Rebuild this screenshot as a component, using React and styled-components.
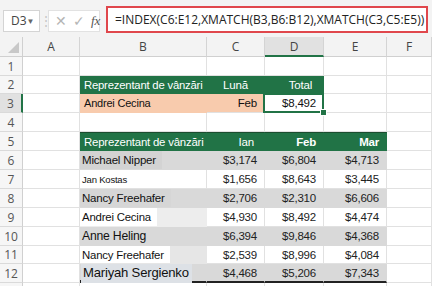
import styled, { createGlobalStyle } from "styled-components";

const Global = createGlobalStyle`
  html, body { margin: 0; padding: 0; background: #fff; }
  body { width: 432px; height: 286px; overflow: hidden; font-family: "Liberation Sans", Arial, sans-serif; }
`;

const GREEN = "#217346";
const GRAY = "#d9d9d9";
const ORANGE = "#f8cbad";

const Window = styled.div`
  width: 432px;
  height: 286px;
  overflow: hidden;
  display: flex;
  flex-direction: column;
  background: #fff;
`;

const FormulaBar = styled.div`
  flex-shrink: 0;
  display: flex;
  align-items: center;
  height: 37px;
  box-sizing: border-box;
  padding: 0 4px 3px 3px;
  background: #f3f3f3;
`;

const NameBox = styled.div`
  display: flex;
  align-items: center;
  justify-content: space-between;
  width: 37px;
  height: 22px;
  box-sizing: border-box;
  padding: 0 5px 0 7px;
  margin-top: 7px;
  background: #fff;
  border: 1px solid #d4d4d4;
  font-family: "Open Sans", sans-serif;
  font-size: 12px;
  color: #444;

  span { font-size: 8px; color: #666; }
`;

const Grip = styled.div`
  width: 8px;
  margin-top: 7px;
  text-align: center;
  color: #c4c4c4;
  font-size: 12px;
  line-height: 1;
`;

const FxBox = styled.div`
  display: flex;
  align-items: center;
  gap: 6px;
  width: 52px;
  height: 22px;
  margin-top: 7px;
  box-sizing: border-box;
  padding-left: 6px;
  background: #fff;
  border: 1px solid #e2e2e2;
  color: #b5b5b5;
  font-size: 14px;
`;

const Fx = styled.i`
  font-family: "Liberation Serif", serif;
  font-size: 13px;
  color: #555;
`;

const FormulaInput = styled.div`
  flex: 1;
  height: 27px;
  margin-left: 6px;
  margin-top: 4px;
  box-sizing: border-box;
  display: flex;
  align-items: center;
  padding-left: 7px;
  background: #fff;
  border: 2px solid #e0474c;
  font-family: "Open Sans", sans-serif;
  font-size: 12px;
  color: #222;
  white-space: nowrap;
  overflow: hidden;
`;

const Sheet = styled.div`
  flex-shrink: 0;
  display: grid;
  grid-template-columns: 23px 57px 127px 58px 59px 63px 45px;
  grid-template-rows: 20px 19px 18px 19px 19px 19px 19px 19px 19px 19px 19px 18px 19px 20px;
`;

const Corner = styled.div`
  position: relative;
  background: #f3f3f3;
  border-right: 1px solid #d0d0d0;
  border-bottom: 1px solid #d0d0d0;

  &::after {
    content: "";
    position: absolute;
    right: 3px;
    bottom: 3px;
    border-style: solid;
    border-width: 0 0 11px 11px;
    border-color: transparent transparent #c8c8c8 transparent;
  }
`;

const ColHead = styled.div`
  display: flex;
  align-items: center;
  justify-content: center;
  box-sizing: border-box;
  background: ${(p) => (p.$active ? "#e1e1e1" : "#f3f3f3")};
  border-right: 1px solid #d4d4d4;
  border-bottom: ${(p) => (p.$active ? `2px solid ${GREEN}` : "1px solid #d0d0d0")};
  font-family: "Open Sans", sans-serif;
  font-size: 12px;
  color: #444;
`;

const RowHead = styled.div`
  display: flex;
  align-items: center;
  justify-content: center;
  box-sizing: border-box;
  background: ${(p) => (p.$active ? "#e1e1e1" : "#f6f6f6")};
  border-right: ${(p) => (p.$active ? `2px solid ${GREEN}` : "1px solid #d0d0d0")};
  border-bottom: 1px solid #dadada;
  font-family: "Open Sans", sans-serif;
  font-size: 12px;
  color: #555;
`;

const Cell = styled.div`
  position: relative;
  display: flex;
  align-items: center;
  justify-content: ${(p) => p.$align || "flex-start"};
  box-sizing: border-box;
  padding: 0 ${(p) => (p.$align === "flex-end" ? "7px" : "4px")};
  background: ${(p) => p.$bg || "#fff"};
  border-right: 1px solid ${(p) => p.$line || "#e1e1e1"};
  border-bottom: 1px solid ${(p) => p.$line || "#e1e1e1"};
  ${(p) => p.$top && `border-top: 1px solid #1b4d2f;`}
  ${(p) => p.$bottom && `border-bottom: 2px solid #222;`}
  color: ${(p) => p.$color || "#111"};
  font-size: ${(p) => p.$size || 11.5}px;
  letter-spacing: -0.2px;
  font-weight: ${(p) => (p.$bold ? 700 : 400)};
  white-space: nowrap;
  overflow: visible;
`;

const Selected = styled(Cell)`
  &::after {
    content: "";
    position: absolute;
    inset: -1px -1px -1px -2px;
    border: 2px solid ${GREEN};
    pointer-events: none;
  }
  &::before {
    content: "";
    position: absolute;
    right: -4px;
    bottom: -4px;
    width: 5px;
    height: 5px;
    background: ${GREEN};
    border: 1px solid #fff;
    z-index: 2;
  }
`;

const NamePatch = styled.span`
  display: flex;
  align-items: center;
  align-self: stretch;
  margin-left: -2px;
  padding: 0 ${(p) => p.$pad || 6}px 0 2px;
  background: ${(p) => p.$bg};
  font-size: ${(p) => p.$size}px;
  ${(p) => p.$cover && `margin-bottom: -2px; align-items: flex-end; padding-bottom: 3px;`}
`;

const Underscore = styled.span`
  align-self: flex-end;
  margin-bottom: -1px;
  margin-left: -2px;
  width: 3px;
  height: 2px;
  background: #222;
`;

const cols = ["A", "B", "C", "D", "E", "F"];

const sales = [
  { name: "Michael Nipper", size: 11.5, patch: "#d3d3d3", rest: GRAY, jan: "$3,174", feb: "$6,804", mar: "$4,713" },
  { name: "Jan Kostas", size: 9.5, patch: "#fff", rest: "#fff", jan: "$1,656", feb: "$8,643", mar: "$3,445" },
  { name: "Nancy Freehafer", size: 11.5, patch: "#d6d6d6", rest: GRAY, jan: "$2,706", feb: "$2,310", mar: "$6,606" },
  { name: "Andrei Cecina", size: 11.4, patch: "#fff", rest: "#ededed", jan: "$4,930", feb: "$8,492", mar: "$4,474" },
  { name: "Anne Heling", size: 12.2, patch: GRAY, rest: GRAY, jan: "$6,394", feb: "$9,846", mar: "$4,368" },
  { name: "Nancy Freehafer", size: 11.4, patch: "#fff", rest: "#e6e6e6", jan: "$2,539", feb: "$8,996", mar: "$4,084" },
  { name: "Mariyah Sergienko", size: 13.1, patch: "#dde1e6", rest: GRAY, jan: "$4,468", feb: "$5,206", mar: "$7,343" },
];

function Blank({ n }) {
  return Array.from({ length: n }, (_, i) => <Cell key={i} />);
}

export default function App() {
  return (
    <Window>
      <Global />
      <FormulaBar>
        <NameBox>
          D3<span>▼</span>
        </NameBox>
        <Grip>⋮</Grip>
        <FxBox>
          <span>✕</span>
          <span>✓</span>
          <Fx>fx</Fx>
        </FxBox>
        <FormulaInput>=INDEX(C6:E12,XMATCH(B3,B6:B12),XMATCH(C3,C5:E5))</FormulaInput>
      </FormulaBar>

      <Sheet>
        <Corner />
        {cols.map((c) => (
          <ColHead key={c} $active={c === "D"}>{c}</ColHead>
        ))}

        {/* rand 1 */}
        <RowHead>1</RowHead>
        <Blank n={6} />

        {/* rand 2: antet tabel mic */}
        <RowHead>2</RowHead>
        <Cell />
        <Cell $bg={GREEN} $line={GREEN} $color="#fff" $size={11.3}>Reprezentant de vânzări</Cell>
        <Cell $bg={GREEN} $line={GREEN} $color="#fff" $align="center">Lună</Cell>
        <Cell $bg={GREEN} $line={GREEN} $color="#fff" $align="flex-end" style={{ paddingRight: 11 }}>Total</Cell>
        <Blank n={2} />

        {/* rand 3 */}
        <RowHead $active>3</RowHead>
        <Cell />
        <Cell $bg={ORANGE} $line={ORANGE} $size={11}>Andrei Cecina</Cell>
        <Cell $bg={ORANGE} $line="#e1e1e1" $align="flex-end">Feb</Cell>
        <Selected $align="flex-end">$8,492</Selected>
        <Blank n={2} />

        {/* rand 4 */}
        <RowHead>4</RowHead>
        <Blank n={6} />

        {/* rand 5: antet tabel mare */}
        <RowHead>5</RowHead>
        <Cell />
        <Cell $bg={GREEN} $line={GREEN} $color="#fff" $top $size={11.4}>Reprezentant de vânzări</Cell>
        <Cell $bg={GREEN} $line={GREEN} $color="#fff" $top $align="flex-end" style={{ paddingRight: 10 }}>Ian</Cell>
        <Cell $bg={GREEN} $line={GREEN} $color="#fff" $top $align="flex-end" $bold>Feb</Cell>
        <Cell $bg={GREEN} $line={GREEN} $color="#fff" $top $align="flex-end" $bold>Mar</Cell>
        <Cell />

        {sales.map((r, i) => {
          const bg = i % 2 === 0 ? GRAY : "#fff";
          const line = bg === "#fff" ? "#e1e1e1" : bg;
          const last = i === sales.length - 1;
          return [
            <RowHead key={`h${i}`}>{i + 6}</RowHead>,
            <Cell key={`a${i}`} />,
            <Cell key={`b${i}`} $bg={r.rest} $line={r.rest === "#fff" ? "#e1e1e1" : r.rest} $bottom={last} style={{ paddingLeft: 2 }}>
              {last && <Underscore />}
              <NamePatch $bg={r.patch} $size={r.size} $cover={last} $pad={last ? 3 : 6}>{r.name}</NamePatch>
            </Cell>,
            <Cell key={`c${i}`} $bg={bg} $line={line} $align="flex-end" $bottom={last} $color="#222">{r.jan}</Cell>,
            <Cell key={`d${i}`} $bg={bg} $line={line} $align="flex-end" $bottom={last} $color="#222">{r.feb}</Cell>,
            <Cell key={`e${i}`} $bg={bg} $line={line} $align="flex-end" $bottom={last} $color="#222">{r.mar}</Cell>,
            <Cell key={`f${i}`} />,
          ];
        })}

        {/* rand 13, doar marginea de sus se vede */}
        <RowHead />
        <Blank n={6} />
      </Sheet>
    </Window>
  );
}
